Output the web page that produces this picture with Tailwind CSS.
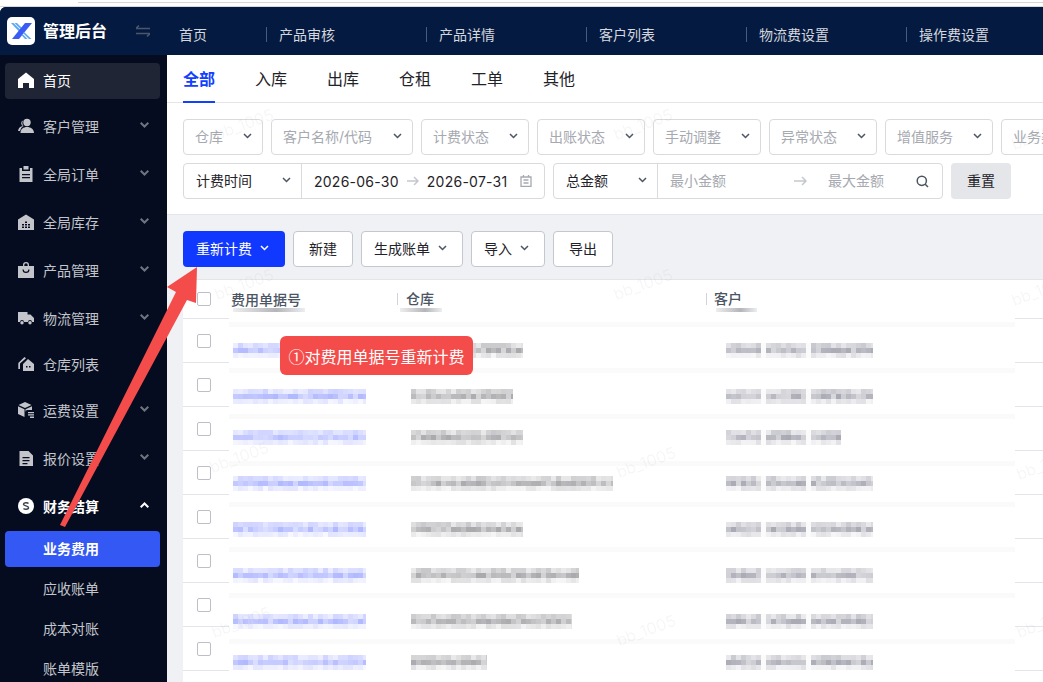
<!DOCTYPE html>
<html lang="zh-CN">
<head>
    <meta charset="UTF-8">
    <title>业务费用</title>
    <script src="https://cdn.jsdelivr.net/npm/@tailwindcss/browser@4"></script>
</head>
<body class="relative w-[1043px] h-[682px] overflow-hidden bg-white font-['Inter','Noto_Sans_CJK_SC',sans-serif] text-[14px] text-[#1f2329]">
    <!-- browser chrome sliver -->
    <div class="h-[7px] bg-white border-b border-[#d9d9d9]">
        <div class="ml-[78px] h-[3px] border-b border-[#d6d6d6]"></div>
    </div>

    <div class="flex h-[675px]">
        <!-- sidebar -->
        <aside class="w-[167px] shrink-0 bg-[#050c1f] text-[#c3c5cb] overflow-hidden rounded-tl-[6px]">
            <div class="h-[48px] bg-[#051a40] flex items-center pl-[7px]">
                <svg class="w-[28px] h-[28px]" viewBox="0 0 28 28">
                    <rect width="28" height="28" rx="5" fill="#fff"/>
                    <path d="M4 6h2.500l8 8-1.500 1.500zM7.500 6H10l6 6-1.200 1.200z" fill="#5aa7f5"/>
                    <path d="M18 6h7L12 22H5z" fill="#3a5cf5"/>
                    <path d="M17 15l7.500 7H22l-6-6zM15.500 17l5 5H18l-3.500-4z" fill="#5aa7f5"/>
                </svg>
                <span class="ml-[8px] text-[16px] leading-[24px] font-bold text-white">管理后台</span>
                <svg class="ml-[29px] w-[14px] h-[14px]" viewBox="0 0 14 14" fill="none" stroke="#4c566b" stroke-width="1.600">
                    <path d="M0 4.500h14M0 4.500l3-3M14 9.500H0M14 9.500l-3 3"/>
                </svg>
            </div>

            <nav class="flex flex-col">
                <a class="w-[155px] ml-[5px] mt-[8px] mb-[4px] h-[36px] pb-[2px] rounded-[4px] bg-[#1f2535] flex items-center pl-[13px] text-white">
                    <svg class="w-[16px] h-[16px] mr-[9px]" viewBox="0 0 16 16" fill="#fff"><path d="M8 .5 16 7v9h-5v-5H5v5H0V7z"/></svg>
                    首页
                </a>
                <a class="h-[48px] pb-[2px] flex items-center pl-[18px] pr-[18px]">
                    <svg class="w-[16px] h-[16px] mr-[9px]" viewBox="0 0 16 16" fill="#c3c5cb"><circle cx="9" cy="4.500" r="3.700"/><path d="M2.500 15c0-4 3-6 6.500-6s7 2 7 6zM5 2.500A3 3 0 0 0 5 8 6 6 0 0 0 0 13h2a7 7 0 0 1 3.500-5A5 5 0 0 1 5 2.500z"/></svg>
                    <span class="flex-1">客户管理</span>
                    <svg class="w-[9px] h-[6px] mb-[2px]" viewBox="0 0 9 6" fill="none" stroke="#6f7480" stroke-width="2"><path d="M.7.8 4.500 4.500 8.300.8"/></svg>
                </a>
                <a class="h-[48px] pb-[2px] flex items-center pl-[18px] pr-[18px]">
                    <svg class="w-[16px] h-[16px] mr-[9px]" viewBox="0 0 16 16" fill="#c3c5cb"><path d="M1.500 2h2.500v3h8V2h2.500v14h-13zM5.500 0h5v3.500h-5zM4 8h8v1.200H4zM4 11h8v1.200H4z" fill-rule="evenodd"/></svg>
                    <span class="flex-1">全局订单</span>
                    <svg class="w-[9px] h-[6px] mb-[2px]" viewBox="0 0 9 6" fill="none" stroke="#6f7480" stroke-width="2"><path d="M.7.8 4.500 4.500 8.300.8"/></svg>
                </a>
                <a class="h-[48px] pb-[2px] flex items-center pl-[18px] pr-[18px]">
                    <svg class="w-[16px] h-[16px] mr-[9px]" viewBox="0 0 16 16" fill="#c3c5cb"><path d="M8 .5 16 5.500V16H0V5.500zM4 10v1.500h2V10zM7 10v1.500h2V10zM10 10v1.500h2V10zM4 12.500V14h2v-1.500zM7 12.500V14h2v-1.500zM10 12.500V14h2v-1.500zM7 7.500V9h2V7.500z" fill-rule="evenodd"/></svg>
                    <span class="flex-1">全局库存</span>
                    <svg class="w-[9px] h-[6px] mb-[2px]" viewBox="0 0 9 6" fill="none" stroke="#6f7480" stroke-width="2"><path d="M.7.8 4.500 4.500 8.300.8"/></svg>
                </a>
                <a class="h-[48px] pb-[2px] flex items-center pl-[18px] pr-[18px]">
                    <svg class="w-[16px] h-[16px] mr-[9px]" viewBox="0 0 16 16" fill="#c3c5cb"><path d="M5 4V3a3 3 0 0 1 6 0v1h5v12H0V4zM6.300 4h3.400V3a1.700 1.700 0 0 0-3.400 0zM4.500 7.500a3.500 3.500 0 0 0 7 0h-1.200a2.300 2.300 0 0 1-4.600 0z" fill-rule="evenodd"/></svg>
                    <span class="flex-1">产品管理</span>
                    <svg class="w-[9px] h-[6px] mb-[2px]" viewBox="0 0 9 6" fill="none" stroke="#6f7480" stroke-width="2"><path d="M.7.8 4.500 4.500 8.300.8"/></svg>
                </a>
                <a class="h-[48px] pb-[2px] flex items-center pl-[18px] pr-[18px]">
                    <svg class="w-[16px] h-[16px] mr-[9px]" viewBox="0 0 16 16" fill="#c3c5cb"><path d="M0 2h9.500v2.500h3L16 8v4h-2a2 2 0 0 0-4 0H6a2 2 0 0 0-4 0H0z"/><circle cx="4" cy="12.800" r="1.700"/><circle cx="12" cy="12.800" r="1.700"/></svg>
                    <span class="flex-1">物流管理</span>
                    <svg class="w-[9px] h-[6px] mb-[2px]" viewBox="0 0 9 6" fill="none" stroke="#6f7480" stroke-width="2"><path d="M.7.8 4.500 4.500 8.300.8"/></svg>
                </a>
                <a class="h-[44px] pb-[2px] flex items-center pl-[18px] pr-[18px]">
                    <svg class="w-[16px] h-[16px] mr-[9px]" viewBox="0 0 16 16" fill="#c3c5cb"><path d="M10 3l6 5v7H5V8zM8 10v1.500h1.500V10zM11 10v1.500h1.500V10z" fill-rule="evenodd"/><path d="M6.500 1 8 2.200 2 7.500V13H.3V7z"/></svg>
                    <span class="flex-1">仓库列表</span>
                </a>
                <a class="h-[48px] pb-[2px] flex items-center pl-[18px] pr-[18px]">
                    <svg class="w-[16px] h-[16px] mr-[9px]" viewBox="0 0 16 16" fill="#c3c5cb"><path d="M7 0l6.500 3L7 6 .5 3zM0 4.200 6.500 7.200V15L0 12zM14 4.200V8H9.500a2 2 0 0 0-2 2v4.500V7.200z"/><path d="M10 10h6v1.300h-6zM10 12.300h6v1.300h-6zM12 14.500h4V16h-4z"/></svg>
                    <span class="flex-1">运费设置</span>
                    <svg class="w-[9px] h-[6px] mb-[2px]" viewBox="0 0 9 6" fill="none" stroke="#6f7480" stroke-width="2"><path d="M.7.8 4.500 4.500 8.300.8"/></svg>
                </a>
                <a class="h-[48px] pb-[2px] flex items-center pl-[18px] pr-[18px]">
                    <svg class="w-[16px] h-[16px] mr-[9px]" viewBox="0 0 16 16" fill="#c3c5cb"><path d="M1.500 1h9L15 5.500V16H1.500zM4.500 7v1.300h7V7zM4.500 10v1.300h7V10zM4.500 13v1.300h5V13z" fill-rule="evenodd"/></svg>
                    <span class="flex-1">报价设置</span>
                    <svg class="w-[9px] h-[6px] mb-[2px]" viewBox="0 0 9 6" fill="none" stroke="#6f7480" stroke-width="2"><path d="M.7.8 4.500 4.500 8.300.8"/></svg>
                </a>
                <a class="h-[48px] pb-[2px] flex items-center pl-[18px] pr-[18px] text-white font-semibold">
                    <svg class="w-[16px] h-[16px] mr-[9px]" viewBox="0 0 16 16"><circle cx="8" cy="8" r="8" fill="#fff"/><path d="M10.500 5.500C9.500 4.500 5.500 4.500 5.500 6.300s5 1.400 5 3.400-4 1.800-5 .8" fill="none" stroke="#3c4150" stroke-width="1.500"/></svg>
                    <span class="flex-1">财务结算</span>
                    <svg class="w-[9px] h-[6px] mb-[2px]" viewBox="0 0 9 6" fill="none" stroke="#fff" stroke-width="2"><path d="M.7 5.200 4.500 1.500 8.300 5.200"/></svg>
                </a>
                <a class="w-[155px] ml-[5px] mb-[2px] h-[36px] pb-[2px] rounded-[4px] bg-[#3358f4] flex items-center pl-[38px] text-white font-semibold">业务费用</a>
                <a class="h-[40px] pb-[2px] flex items-center pl-[43px]">应收账单</a>
                <a class="h-[40px] pb-[2px] flex items-center pl-[43px]">成本对账</a>
                <a class="h-[40px] pb-[2px] flex items-center pl-[43px]">账单模版</a>
            </nav>
        </aside>

        <!-- main -->
        <main class="flex-1 min-w-0 overflow-hidden bg-[#f0f1f5]">
            <div class="h-[48px] pt-[7px] bg-[#051a40] flex items-center text-[#d4d7de]">
                <span class="w-[100px] pl-[12px] border-r border-[#4d5a75] leading-[15px]">首页</span>
                <span class="w-[160px] pl-[12px] border-r border-[#4d5a75] leading-[15px]">产品审核</span>
                <span class="w-[160px] pl-[12px] border-r border-[#4d5a75] leading-[15px]">产品详情</span>
                <span class="w-[160px] pl-[12px] border-r border-[#4d5a75] leading-[15px]">客户列表</span>
                <span class="w-[160px] pl-[12px] border-r border-[#4d5a75] leading-[15px]">物流费设置</span>
                <span class="pl-[12px] leading-[15px]">操作费设置</span>
            </div>

            <div class="h-[48px] bg-white border-b border-[#e5e5e5] flex pl-[16px] gap-[40px] text-[16px] text-[#1f2329]">
                <span class="h-[48px] leading-[49px] font-semibold text-[#1240ff] border-b-2 border-[#1240ff]">全部</span>
                <span class="leading-[49px]">入库</span>
                <span class="leading-[49px]">出库</span>
                <span class="leading-[49px]">仓租</span>
                <span class="leading-[49px]">工单</span>
                <span class="leading-[49px]">其他</span>
            </div>

            <!-- filters -->
            <div class="h-[112px] bg-white border-b border-[#e3e5ea] pt-[16px] pl-[16px]">
                <div class="flex gap-[8px] w-[900px] text-[#a6a9b0]">
                    <div class="w-[80px] h-[36px] pb-[2px] shrink-0 border border-[#d9dadd] rounded-[4px] flex items-center justify-between pl-[11px] pr-[10px]">仓库<svg class="w-[9px] h-[6px]" viewBox="0 0 9 6" fill="none" stroke="#4b5563" stroke-width="1.500"><path d="M1 1l3.500 3.500L8 1"/></svg></div>
                    <div class="w-[142px] h-[36px] pb-[2px] shrink-0 border border-[#d9dadd] rounded-[4px] flex items-center justify-between pl-[11px] pr-[10px]">客户名称/代码<svg class="w-[9px] h-[6px]" viewBox="0 0 9 6" fill="none" stroke="#4b5563" stroke-width="1.500"><path d="M1 1l3.500 3.500L8 1"/></svg></div>
                    <div class="w-[108px] h-[36px] pb-[2px] shrink-0 border border-[#d9dadd] rounded-[4px] flex items-center justify-between pl-[11px] pr-[10px]">计费状态<svg class="w-[9px] h-[6px]" viewBox="0 0 9 6" fill="none" stroke="#4b5563" stroke-width="1.500"><path d="M1 1l3.500 3.500L8 1"/></svg></div>
                    <div class="w-[108px] h-[36px] pb-[2px] shrink-0 border border-[#d9dadd] rounded-[4px] flex items-center justify-between pl-[11px] pr-[10px]">出账状态<svg class="w-[9px] h-[6px]" viewBox="0 0 9 6" fill="none" stroke="#4b5563" stroke-width="1.500"><path d="M1 1l3.500 3.500L8 1"/></svg></div>
                    <div class="w-[108px] h-[36px] pb-[2px] shrink-0 border border-[#d9dadd] rounded-[4px] flex items-center justify-between pl-[11px] pr-[10px]">手动调整<svg class="w-[9px] h-[6px]" viewBox="0 0 9 6" fill="none" stroke="#4b5563" stroke-width="1.500"><path d="M1 1l3.500 3.500L8 1"/></svg></div>
                    <div class="w-[108px] h-[36px] pb-[2px] shrink-0 border border-[#d9dadd] rounded-[4px] flex items-center justify-between pl-[11px] pr-[10px]">异常状态<svg class="w-[9px] h-[6px]" viewBox="0 0 9 6" fill="none" stroke="#4b5563" stroke-width="1.500"><path d="M1 1l3.500 3.500L8 1"/></svg></div>
                    <div class="w-[108px] h-[36px] pb-[2px] shrink-0 border border-[#d9dadd] rounded-[4px] flex items-center justify-between pl-[11px] pr-[10px]">增值服务<svg class="w-[9px] h-[6px]" viewBox="0 0 9 6" fill="none" stroke="#4b5563" stroke-width="1.500"><path d="M1 1l3.500 3.500L8 1"/></svg></div>
                    <div class="w-[108px] h-[36px] pb-[2px] shrink-0 border border-[#d9dadd] rounded-[4px] flex items-center pl-[11px] whitespace-nowrap">业务类型</div>
                </div>
                <div class="flex gap-[8px] mt-[8px]">
                    <div class="w-[362px] h-[36px] border border-[#d9dadd] rounded-[4px] flex items-center">
                        <div class="w-[118px] h-full pb-[2px] border-r border-[#d9dadd] flex items-center justify-between pl-[12px] pr-[10px]">计费时间<svg class="w-[9px] h-[6px]" viewBox="0 0 9 6" fill="none" stroke="#4b5563" stroke-width="1.500"><path d="M1 1l3.500 3.500L8 1"/></svg></div>
                        <span class="ml-[12px] pt-[1px] tracking-[0.25px]">2026-06-30</span>
                        <svg class="mx-[8px] w-[12px] h-[10px]" viewBox="0 0 12 10" fill="none" stroke="#c4c7cd" stroke-width="1.500"><path d="M0 5h11M7 1l4 4-4 4"/></svg>
                        <span class="pt-[1px] tracking-[0.25px]">2026-07-31</span>
                        <svg class="ml-[13px] w-[12px] h-[12px]" viewBox="0 0 12 12" fill="none" stroke="#a6a9b0" stroke-width="1.300"><path d="M1 2h10v9.500H1zM3.500 0v2M8.500 0v2M3.500 5h5M3.500 8h5"/></svg>
                    </div>
                    <div class="w-[390px] h-[36px] border border-[#d9dadd] rounded-[4px] flex items-center text-[#a6a9b0]">
                        <div class="w-[104px] h-full pb-[2px] border-r border-[#d9dadd] flex items-center justify-between pl-[12px] pr-[10px] text-[#1f2329]">总金额<svg class="w-[9px] h-[6px]" viewBox="0 0 9 6" fill="none" stroke="#4b5563" stroke-width="1.500"><path d="M1 1l3.500 3.500L8 1"/></svg></div>
                        <span class="ml-[12px] w-[124px] pb-[2px]">最小金额</span>
                        <svg class="w-[13px] h-[10px]" viewBox="0 0 13 10" fill="none" stroke="#c4c7cd" stroke-width="1.500"><path d="M0 5h12M8 1l4 4-4 4"/></svg>
                        <span class="ml-[21px] w-[88px] pb-[2px]">最大金额</span>
                        <svg class="w-[13px] h-[13px]" viewBox="0 0 13 13" fill="none" stroke="#4b5563" stroke-width="1.500"><circle cx="5.800" cy="5.800" r="4.600"/><path d="M9 9l3 3"/></svg>
                    </div>
                    <div class="w-[60px] h-[36px] pb-[2px] rounded-[4px] bg-[#e5e6e9] flex items-center justify-center">重置</div>
                </div>
            </div>

            <!-- toolbar -->
            <div class="h-[64px] pl-[16px] pt-[16px] flex items-start gap-[8px]">
                <button class="w-[102px] h-[36px] pb-[2px] pr-[3px] rounded-[4px] bg-[#1138ff] text-white flex items-center justify-center gap-[8px]">重新计费<svg class="w-[9px] h-[6px]" viewBox="0 0 9 6" fill="none" stroke="#fff" stroke-width="1.500"><path d="M1 1l3.500 3.500L8 1"/></svg></button>
                <button class="w-[60px] h-[36px] pb-[2px] rounded-[4px] bg-white border border-[#c4c7cd]">新建</button>
                <button class="w-[102px] h-[36px] pb-[2px] pr-[3px] rounded-[4px] bg-white border border-[#c4c7cd] flex items-center justify-center gap-[8px]">生成账单<svg class="w-[9px] h-[6px]" viewBox="0 0 9 6" fill="none" stroke="#4b5563" stroke-width="1.500"><path d="M1 1l3.500 3.500L8 1"/></svg></button>
                <button class="w-[74px] h-[36px] pb-[2px] pr-[3px] rounded-[4px] bg-white border border-[#c4c7cd] flex items-center justify-center gap-[8px]">导入<svg class="w-[9px] h-[6px]" viewBox="0 0 9 6" fill="none" stroke="#4b5563" stroke-width="1.500"><path d="M1 1l3.500 3.500L8 1"/></svg></button>
                <button class="w-[60px] h-[36px] pb-[2px] rounded-[4px] bg-white border border-[#c4c7cd]">导出</button>
            </div>

            <!-- table -->
            <div class="flex ml-[16px] bg-white border-t border-[#e3e5ea] h-[403px]">
                <div id="checks" class="w-[46px] shrink-0"></div>
                <div class="relative w-[786px] shrink-0">
                    <div class="h-[38px] flex items-center font-medium text-[#4b5563]">
                        <span class="w-[168px] pl-[2px]">费用单据号</span>
                        <span class="w-[309px] h-[12px] leading-[12px] pl-[8px] border-l border-[#d0d3d9]">仓库</span>
                        <span class="h-[12px] leading-[12px] pl-[7px] border-l border-[#d0d3d9]">客户</span>
                    </div>
                    <div id="redactions"></div>
                </div>
                <div id="lines" class="flex-1"></div>
            </div>
        </main>
    </div>

    <!-- annotation -->
    <div class="absolute left-[280px] top-[336px] w-[193px] h-[39px] rounded-[6px] bg-[#f44c4a] text-white text-[16px] font-['Noto_Sans_CJK_SC',sans-serif] flex items-center justify-center">①对费用单据号重新计费</div>
    <svg class="absolute left-0 top-0 w-[1043px] h-[682px] pointer-events-none" viewBox="0 0 1043 682">
        <path d="M60 525 65 527 187 300 196 303 197 267 167 287 176 292Z" fill="#f44c4a"/>
    </svg>

    <!-- watermarks -->
    <div id="marks"></div>

    <script>
        // table geometry measured from the screenshot, y values are page coordinates
        const tableTop = 280;
        const stripes = [322, 368, 414, 461, 502, 547, 593, 639];
        const mosaicTops = [343, 389, 430, 476, 522, 568, 614, 655];
        const warehouseWidths = [112, 102, 112, 202, 112, 168, 161, 76];
        const customerWidths = [147, 147, 115, 147, 147, 147, 147, 147];

        // stable pseudo random so each render gives the same blur blocks
        let seed = 7;
        function rnd() {
            seed = (seed * 16807) % 2147483647;
            return seed / 2147483647;
        }

        function mosaic(left, top, width, tint, gaps = []) {
            const box = document.createElement('div');
            const cols = Math.ceil(width / 5);
            box.style.cssText = `position:absolute;left:${left}px;top:${top}px;width:${width}px;height:15px;overflow:hidden;display:grid;grid-template-columns:repeat(${cols},5px);grid-auto-rows:5px;`;
            for (let row = 0; row < 3; row++) {
                for (let col = 0; col < cols; col++) {
                    const cell = document.createElement('div');
                    let strength = row === 1 ? 0.35 + rnd() * 0.4 : row === 0 ? 0.18 + rnd() * 0.3 : 0.08 + rnd() * 0.2;
                    if (gaps.includes(col)) strength = 0.03;
                    cell.style.background = `rgba(${tint},${strength.toFixed(2)})`;
                    box.appendChild(cell);
                }
            }
            return box;
        }

        const checks = document.getElementById('checks');
        const lines = document.getElementById('lines');

        // checkbox column and the row rules on the far right
        checks.innerHTML = '<div class="h-[39px] border-b border-[#e3e5ea] pl-[14px] pt-[12px]"><div class="w-[14px] h-[14px] border border-[#bcbfc5] rounded-[2px]"></div></div>';
        lines.innerHTML = '<div class="h-[39px] border-b border-[#e3e5ea]"></div>';
        for (let i = 0; i < 8; i++) {
            checks.insertAdjacentHTML('beforeend', '<div class="h-[44px] border-b border-[#e3e5ea] pl-[14px] pt-[15px]"><div class="w-[14px] h-[14px] border border-[#bcbfc5] rounded-[2px]"></div></div>');
            lines.insertAdjacentHTML('beforeend', '<div class="h-[44px] border-b border-[#e3e5ea]"></div>');
        }

        // redaction layer over the table body
        const layer = document.getElementById('redactions');
        stripes.forEach((y) => {
            const stripe = document.createElement('div');
            stripe.style.cssText = `position:absolute;left:0;right:0;top:${y - tableTop}px;height:5px;background:#fafafa;`;
            layer.appendChild(stripe);
        });
        mosaicTops.forEach((y, i) => {
            layer.appendChild(mosaic(4, y - tableTop, 133, '150,160,255'));
            layer.appendChild(mosaic(182, y - tableTop, warehouseWidths[i], '140,140,145'));
            layer.appendChild(mosaic(497, y - tableTop, customerWidths[i], '140,140,155', [7, 16]));
        });

        // small smudges under the header labels
        [[4, 72], [171, 42], [487, 41]].forEach(([left, width]) => {
            const smudge = document.createElement('div');
            smudge.style.cssText = `position:absolute;left:${left}px;top:28px;width:${width}px;height:4px;background:linear-gradient(90deg,#eeeeef,#b4b5b9 60%,#eceff2);`;
            layer.appendChild(smudge);
        });

        // tenant watermark
        const marks = document.getElementById('marks');
        [[213, 112], [612, 112], [1010, 122], [213, 272], [612, 272], [1010, 278], [208, 445], [615, 450], [1015, 452], [210, 610], [615, 618], [1015, 610]].forEach(([x, y]) => {
            const mark = document.createElement('span');
            mark.textContent = 'bb_1005';
            mark.style.cssText = `position:absolute;left:${x}px;top:${y}px;font-size:16px;color:rgba(120,120,130,.07);transform:rotate(-20deg);white-space:nowrap;pointer-events:none;`;
            marks.appendChild(mark);
        });
    </script>
</body>
</html>
